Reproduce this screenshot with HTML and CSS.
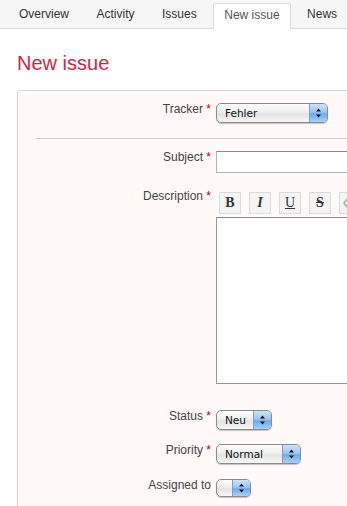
FILE: index.html
```html
<!DOCTYPE html>
<html lang="en">
<head>
    <meta charset="UTF-8">
    <meta name="viewport" content="width=device-width, initial-scale=1.0">
    <title>New issue</title>
    <link rel="stylesheet" href="styles.css">
</head>
<body>
    <div class="tabs">
        <a class="tab">Overview</a>
        <a class="tab">Activity</a>
        <a class="tab">Issues</a>
        <a class="tab selected">New issue</a>
        <a class="tab">News</a>
    </div>

    <div class="content">
        <h2>New issue</h2>

        <div class="box">
            <div class="row row-tracker">
                <label>Tracker <span class="required">*</span></label>
                <div class="select" style="width: 112px">
                    <span class="value">Fehler</span>
                    <span class="arrows"><svg width="7" height="10" viewBox="0 0 7 10"><path d="M3.5 0.5 L6 3.5 L1 3.5 Z M1 6.5 L6 6.5 L3.5 9.5 Z" fill="#111"/></svg></span>
                </div>
            </div>

            <hr>

            <div class="row row-subject">
                <label>Subject <span class="required">*</span></label>
                <input type="text" class="text-input">
            </div>

            <div class="row row-description">
                <label>Description <span class="required">*</span></label>
                <div class="editor">
                    <div class="toolbar">
                        <button class="tb tb-bold">B</button>
                        <button class="tb tb-italic">I</button>
                        <button class="tb tb-underline">U</button>
                        <button class="tb tb-strike">S</button>
                        <button class="tb tb-code"><svg width="20" height="20" viewBox="0 0 20 20"><path d="M7 6 L4 10 L7 14" fill="none" stroke="#aaa" stroke-width="1.5"/><path d="M13 6 L16 10 L13 14" fill="none" stroke="#aaa" stroke-width="1.5"/></svg></button>
                    </div>
                    <textarea class="text-area"></textarea>
                </div>
            </div>

            <div class="row row-status">
                <label>Status <span class="required">*</span></label>
                <div class="select" style="width: 56px">
                    <span class="value">Neu</span>
                    <span class="arrows"><svg width="7" height="10" viewBox="0 0 7 10"><path d="M3.5 0.5 L6 3.5 L1 3.5 Z M1 6.5 L6 6.5 L3.5 9.5 Z" fill="#111"/></svg></span>
                </div>
            </div>

            <div class="row row-priority">
                <label>Priority <span class="required">*</span></label>
                <div class="select" style="width: 85px">
                    <span class="value">Normal</span>
                    <span class="arrows"><svg width="7" height="10" viewBox="0 0 7 10"><path d="M3.5 0.5 L6 3.5 L1 3.5 Z M1 6.5 L6 6.5 L3.5 9.5 Z" fill="#111"/></svg></span>
                </div>
            </div>

            <div class="row row-assigned">
                <label>Assigned to</label>
                <div class="select small" style="width: 35px">
                    <span class="value"></span>
                    <span class="arrows"><svg width="7" height="10" viewBox="0 0 7 10"><path d="M3.5 0.5 L6 3.5 L1 3.5 Z M1 6.5 L6 6.5 L3.5 9.5 Z" fill="#111"/></svg></span>
                </div>
            </div>
        </div>
    </div>
</body>
</html>
```

FILE: styles.css
```css
html {
    overflow: hidden;
}
body {
    margin: 0;
    padding: 0;
    font-family: "Liberation Sans", Arial, sans-serif;
    font-size: 12px;
    color: #444;
    background: #fff;
}

/* tabs */
.tabs {
    display: flex;
    align-items: flex-end;
    gap: 5.5px;
    height: 28px;
    padding-left: 8px;
    background-color: #f6f6f6;
    border-bottom: 1px solid #dcdcdc;
    white-space: nowrap;
}
.tab {
    box-sizing: border-box;
    height: 26px;
    margin-bottom: -1px;
    padding: 3px 10px 0;
    border: 1px solid transparent;
    border-bottom: 0;
    line-height: 14px;
    color: #333;
}
.tab.selected {
    padding-top: 4px;
    background-color: #fff;
    border-color: #dcdcdc;
    border-radius: 3px 3px 0 0;
    color: #555;
}

/* content */
.content {
    padding: 22px 0 0 17px;
}
h2 {
    margin: 0 0 15px;
    font-size: 20px;
    font-weight: normal;
    line-height: 24px;
    color: #d42344;
}
.box {
    width: 560px;
    height: 600px;
    padding-top: 12px;
    background-color: #fff9f8;
    border: 1px solid #dad6d6;
    border-radius: 3px;
}
hr {
    height: 0;
    margin: 15px 0 12px 18px;
    border: 0;
    border-top: 1px solid #cfcaca;
}

/* form rows */
.row {
    display: flex;
    align-items: flex-start;
}
.row label {
    flex: 0 0 193px;
    margin: -1px 5px 0 0;
    text-align: right;
    line-height: 14px;
    white-space: nowrap;
}
.required {
    color: #bb0000;
}
.row-description {
    margin-top: 19px;
}
.row-description label {
    margin-top: -3px;
}
.row-status {
    margin-top: 26px;
}
.row-priority {
    margin-top: 14px;
}
.row-assigned {
    margin-top: 15px;
}

/* aqua style selects */
.select {
    display: flex;
    box-sizing: border-box;
    height: 20px;
    border: 1px solid #8a8a8a;
    border-radius: 5px;
    background: linear-gradient(#fdfdfd, #efefef 45%, #e2e2e2 55%, #f7f7f7);
    box-shadow: 0 1px 1px rgba(0, 0, 0, 0.22);
    overflow: hidden;
}
.select.small {
    height: 18px;
}
.select .value {
    flex: 1;
    padding-left: 8px;
    font-family: "DejaVu Sans", sans-serif;
    font-size: 10.5px;
    line-height: 18px;
    color: #111;
    white-space: nowrap;
}
.select .arrows {
    display: flex;
    align-items: center;
    justify-content: center;
    width: 17px;
    border-left: 1px solid #7f9cc7;
    background: linear-gradient(#cfe3f8, #9cc5f2 45%, #6ea9ec 55%, #a9d1fb);
}

/* text fields */
.text-input {
    box-sizing: border-box;
    width: 300px;
    height: 22px;
    margin: 0;
    border: 1px solid #b4b4b4;
    border-top-color: #8a8a8a;
    background: #fff;
}
.editor {
    display: flex;
    flex-direction: column;
    gap: 3px;
}
.toolbar {
    display: flex;
    gap: 8px;
    padding-left: 3px;
}
.tb {
    box-sizing: border-box;
    width: 22px;
    height: 22px;
    padding: 0;
    border: 1px solid #dcdcdc;
    background: #f4f4f4;
    font-family: "Liberation Serif", "DejaVu Serif", serif;
    font-size: 14px;
    font-weight: bold;
    line-height: 20px;
    color: #333;
}
.tb-italic {
    font-style: italic;
}
.tb-underline {
    font-weight: normal;
    text-decoration: underline;
}
.tb-strike {
    text-decoration: line-through;
}
.tb svg {
    display: block;
}
.text-area {
    box-sizing: border-box;
    width: 300px;
    height: 167px;
    margin: 0;
    border: 1px solid #999;
    border-top-color: #8a8a8a;
    background: #fff;
    resize: none;
}
```
